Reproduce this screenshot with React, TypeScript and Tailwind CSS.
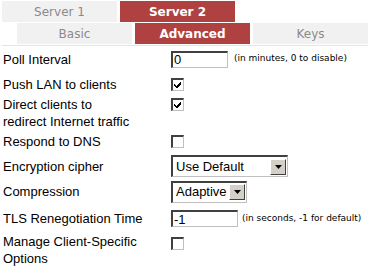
import React from 'react';

const Inset: React.FC<{ className?: string; children?: React.ReactNode }> = ({ className = '', children }) => (
  <div className={`border-t-2 border-l-2 border-t-[#404040] border-l-[#404040] border-b border-r border-b-[#c0c0c0] border-r-[#c0c0c0] bg-white ${className}`}>
    {children}
  </div>
);

const Checkbox: React.FC<{ checked?: boolean }> = ({ checked }) => (
  <Inset className="w-[13px] h-[13px] relative">
    {checked && (
      <svg width="9" height="9" viewBox="0 0 9 9" className="absolute left-[0px] top-[0px]">
        <path d="M1 4h1v1h1v1h1v-1h1v-1h1v-1h1v-1h1v3h-1v1h-1v1h-1v1h-2v-1h-1v-1h-1z" fill="#000" />
      </svg>
    )}
  </Inset>
);

const Select: React.FC<{ value: string; width: string }> = ({ value, width }) => (
  <Inset className={`${width} h-[22px] flex items-center justify-between pr-[1px]`}>
    <span className="pl-[3px] text-[13px] text-black">{value}</span>
    <div className="w-[16px] h-[16px] bg-[#d4d0c8] border-t border-l border-t-white border-l-white border-b border-r border-b-[#404040] border-r-[#404040] flex items-center justify-center">
      <svg width="7" height="4" viewBox="0 0 7 4">
        <path d="M0 0h7L3.5 4z" fill="#000" />
      </svg>
    </div>
  </Inset>
);

const Row: React.FC<{ label: React.ReactNode; h: string; top?: string; children?: React.ReactNode }> = ({ label, h, top, children }) => (
  <div className={`flex ${top ? 'items-start' : 'items-center'} ${h}`}>
    <div className={`w-[171px] pl-[3px] text-[13px] leading-[17px] text-black ${top ? 'self-center' : ''}`}>{label}</div>
    <div className={`flex items-center ${top ?? ''}`}>{children}</div>
  </div>
);

const hint = { fontFamily: '"DejaVu Sans", Verdana, sans-serif' };

export default function App() {
  return (
    <div className="w-[368px] h-[267px] bg-white overflow-hidden" style={{ fontFamily: '"Liberation Sans", Arial, sans-serif' }}>
      <div className="pl-[2px] pt-[1px]" style={{ fontFamily: '"DejaVu Sans", Verdana, sans-serif' }}>
        <div className="flex gap-[3px] h-[21px]">
          <div className="w-[115px] bg-[#f1f1f1] text-[#8a8a8a] text-[12px] flex items-center justify-center">Server 1</div>
          <div className="w-[115px] bg-[#b04141] text-white font-bold text-[12px] flex items-center justify-center">Server 2</div>
        </div>
        <div className="flex gap-[3px] h-[21px] mt-[1px] pl-[15px]">
          <div className="w-[115px] bg-[#f1f1f1] text-[#8a8a8a] text-[12px] flex items-center justify-center">Basic</div>
          <div className="w-[115px] bg-[#b04141] text-white font-bold text-[12px] flex items-center justify-center">Advanced</div>
          <div className="flex-1 bg-[#f1f1f1] text-[#8a8a8a] text-[12px] flex items-center justify-center">Keys</div>
        </div>
        <div className="h-[1px] bg-[#e4e4e4] mt-[1px]" />
      </div>

      <div>
        <Row label="Poll Interval" h="h-[26px]">
          <Inset className="w-[57px] h-[17px] flex items-center">
            <span className="pl-[1px] text-[13px] leading-none">0</span>
          </Inset>
          <span className="ml-[6px] text-[9px] whitespace-nowrap text-black" style={hint}>
            (in minutes, 0 to disable)
          </span>
        </Row>
        <Row label="Push LAN to clients" h="h-[24px]">
          <Checkbox checked />
        </Row>
        <Row label={<>Direct clients to<br />redirect Internet traffic</>} h="h-[34px]" top="mt-[2px]">
          <Checkbox checked />
        </Row>
        <Row label="Respond to DNS" h="h-[23px]">
          <Checkbox />
        </Row>
        <Row label="Encryption cipher" h="h-[26px]">
          <Select value="Use Default" width="w-[117px]" />
        </Row>
        <Row label="Compression" h="h-[25px]">
          <Select value="Adaptive" width="w-[76px]" />
        </Row>
        <Row label="TLS Renegotiation Time" h="h-[29px]">
          <Inset className="w-[67px] h-[17px] flex items-center">
            <span className="pl-[1px] text-[13px] leading-none">-1</span>
          </Inset>
          <span className="ml-[4px] text-[9px] whitespace-nowrap text-black" style={hint}>
            (in seconds, -1 for default)
          </span>
        </Row>
        <Row label={<>Manage Client-Specific<br />Options</>} h="h-[34px]" top="mt-[4px]">
          <Checkbox />
        </Row>
      </div>
    </div>
  );
}
